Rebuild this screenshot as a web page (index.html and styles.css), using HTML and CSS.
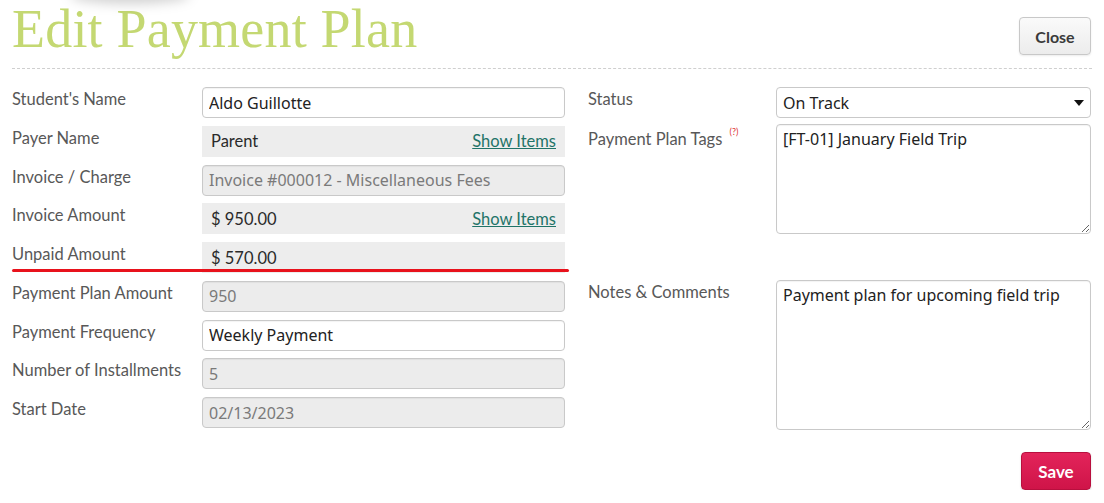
FILE: index.html
```html
<!DOCTYPE html>
<html>
<head>
  <title>Edit Payment Plan</title>
  <link rel="stylesheet" href="styles.css">
</head>
<body>

<div class="smudge"></div>

<div class="page">
  <div class="header">
    <h1>Edit Payment Plan</h1>
    <button class="btn-close">Close</button>
  </div>

  <div class="form">
    <div class="column left">
      <label>Student's Name</label>
      <input class="field" type="text" value="Aldo Guillotte">

      <label>Payer Name</label>
      <div class="static">
        <span>Parent</span>
        <a href="#">Show Items</a>
      </div>

      <label>Invoice / Charge</label>
      <input class="field" type="text" value="Invoice #000012 - Miscellaneous Fees" disabled>

      <label>Invoice Amount</label>
      <div class="static">
        <span>$ 950.00</span>
        <a href="#">Show Items</a>
      </div>

      <label>Unpaid Amount</label>
      <div class="static">
        <span>$ 570.00</span>
      </div>

      <label>Payment Plan Amount</label>
      <input class="field" type="text" value="950" disabled>

      <label>Payment Frequency</label>
      <input class="field" type="text" value="Weekly Payment">

      <label>Number of Installments</label>
      <input class="field" type="text" value="5" disabled>

      <label>Start Date</label>
      <input class="field" type="text" value="02/13/2023" disabled>

      <!-- highlight under the unpaid amount -->
      <div class="underline"></div>
    </div>

    <div class="column right">
      <label>Status</label>
      <div class="select">
        <span>On Track</span>
        <span class="caret"></span>
      </div>

      <label class="tags-label">Payment Plan Tags <sup class="help">(?)</sup></label>
      <textarea class="field tags">[FT-01] January Field Trip</textarea>

      <label class="notes-label">Notes &amp; Comments</label>
      <textarea class="field notes">Payment plan for upcoming field trip</textarea>

      <div class="actions">
        <button class="btn-save">Save</button>
      </div>
    </div>
  </div>
</div>

</body>
</html>
```

FILE: styles.css
```css
body {
  margin: 0;
  font-family: Lato, "Liberation Sans", sans-serif;
  background-color: #fff;
  color: #333;
}

.smudge {
  position: absolute;
  top: -14px;
  left: 70px;
  width: 120px;
  height: 18px;
  border-radius: 50%;
  background-color: rgba(0, 0, 0, 0.18);
  filter: blur(6px);
}

.page {
  padding: 0 12px 0 12px;
}

.header {
  display: flex;
  justify-content: space-between;
  align-items: flex-start;
  height: 68px;
  border-bottom: 1px dashed #cfcfcf;
}

h1 {
  margin: 2px 0 0 0;
  font-family: "Liberation Serif", serif;
  font-weight: normal;
  font-size: 54px;
  line-height: 54px;
  color: #c4d872;
  letter-spacing: 0.2px;
}

.btn-close {
  margin-top: 17px;
  margin-right: 1px;
  width: 72px;
  height: 38px;
  font-family: Lato, "Liberation Sans", sans-serif;
  font-size: 16px;
  font-weight: bold;
  color: #3a3a3a;
  background: linear-gradient(#fafafa, #ececec);
  border: 1px solid #c8c8c8;
  border-radius: 4px;
  box-shadow: 0 1px 2px rgba(0, 0, 0, 0.08);
}

.form {
  display: flex;
  gap: 23px;
  margin-top: 18px;
}

.column {
  display: grid;
  row-gap: 7.75px;
  align-content: start;
}

.left {
  position: relative;
  grid-template-columns: 190px 363px;
}

.right {
  grid-template-columns: 188px 315px;
}

label {
  padding-top: 2px;
  font-size: 16.5px;
  color: #585858;
}

.field {
  box-sizing: border-box;
  height: 31px;
  margin: 0;
  padding: 0 6px;
  font-family: "Noto Sans", sans-serif;
  font-size: 16px;
  color: #222;
  background-color: #fff;
  border: 1px solid #c9c9c9;
  border-radius: 4px;
  box-shadow: inset 0 1px 1px rgba(0, 0, 0, 0.05);
}

.field:disabled {
  background-color: #ececec;
  color: #7a7a7a;
}

.static {
  display: flex;
  justify-content: space-between;
  align-items: center;
  height: 31px;
  padding: 0 9px;
  font-size: 16.5px;
  color: #2a2a2a;
  background-color: #ededed;
}

.static a {
  color: #1f7468;
  font-size: 16.5px;
}

.underline {
  position: absolute;
  left: 0;
  top: 182px;
  width: 557px;
  height: 3px;
  border-radius: 2px;
  background-color: #e8121c;
}

.select {
  display: flex;
  justify-content: space-between;
  align-items: center;
  box-sizing: border-box;
  height: 31px;
  padding: 0 6px;
  font-family: "Noto Sans", sans-serif;
  font-size: 16px;
  color: #222;
  border: 1px solid #c9c9c9;
  border-radius: 4px;
}

.caret {
  width: 0;
  height: 0;
  border-left: 5px solid transparent;
  border-right: 5px solid transparent;
  border-top: 6px solid #111;
}

.help {
  color: #d33;
  font-size: 9px;
  vertical-align: 10px;
  margin-left: 3px;
}

textarea.field {
  padding: 4px 6px;
  resize: vertical;
  line-height: 20px;
}

.tags-label,
.tags {
  margin-top: -2px;
}

.tags {
  height: 110px;
}

.notes-label {
  margin-top: 38px;
}

.notes {
  height: 150px;
  margin-top: 38px;
}

.actions {
  grid-column: 1 / 3;
  display: flex;
  justify-content: flex-end;
  margin-top: 15px;
}

.btn-save {
  width: 70px;
  height: 38px;
  font-family: Lato, "Liberation Sans", sans-serif;
  font-weight: bold;
  font-size: 17px;
  color: #fff;
  background: linear-gradient(#e3245a, #cf1448);
  border: 1px solid #b80f3e;
  border-radius: 4px;
  box-shadow: 0 1px 2px rgba(0, 0, 0, 0.15);
}
```
